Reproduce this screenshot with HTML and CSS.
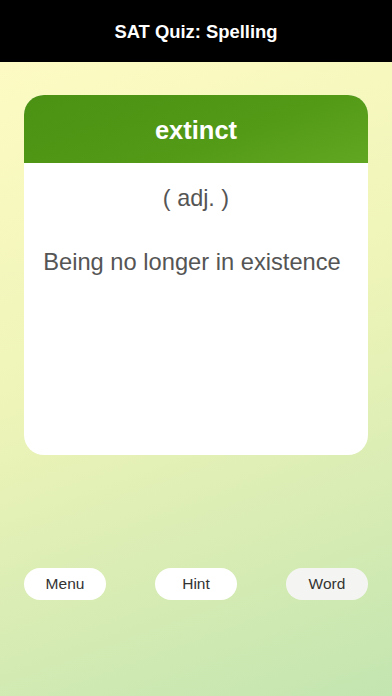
FILE: index.html
```html
<!DOCTYPE html>
<html>
<head>
<meta charset="utf-8">
<link rel="stylesheet" href="styles.css">
</head>
<body>
<div class="app">
  <header class="topbar">SAT Quiz: Spelling</header>
  <main class="content">
    <section class="card">
      <div class="card-head">extinct</div>
      <div class="card-body">
        <div class="pos">( adj. )</div>
        <div class="def">Being no longer in existence</div>
      </div>
    </section>
    <nav class="actions">
      <button class="btn">Menu</button>
      <button class="btn">Hint</button>
      <button class="btn btn-alt">Word</button>
    </nav>
  </main>
</div>
</body>
</html>
```
FILE: styles.css
```css
* { box-sizing: border-box; }
html, body { margin: 0; padding: 0; }
body {
  width: 392px;
  height: 696px;
  overflow: hidden;
  font-family: "Liberation Sans", Arial, sans-serif;
}
.app {
  display: flex;
  flex-direction: column;
  height: 696px;
}
.topbar {
  height: 62px;
  background: #000;
  color: #fff;
  font-weight: bold;
  font-size: 18.4px;
  display: flex;
  align-items: center;
  justify-content: center;
  padding-top: 1px;
}
.content {
  flex: 1;
  background: linear-gradient(160deg, #fdfbc3 0%, #eef4b8 45%, #c3e5b0 100%);
  padding: 33px 24px 0;
  display: flex;
  flex-direction: column;
}
.card {
  height: 360px;
  border-radius: 20px;
  background: #fff;
  overflow: hidden;
  display: flex;
  flex-direction: column;
}
.card-head {
  height: 68px;
  background: linear-gradient(160deg, #4b9113 0%, #539a17 60%, #62a721 100%);
  color: #fff;
  font-weight: bold;
  font-size: 25.5px;
  display: flex;
  align-items: center;
  justify-content: center;
  padding-top: 2px;
}
.card-body {
  display: flex;
  flex-direction: column;
  align-items: center;
  color: #555;
}
.pos {
  margin-top: 22px;
  font-size: 23.4px;
  line-height: 26px;
}
.def {
  margin-top: 38px;
  padding-right: 8px;
  font-size: 23.7px;
  line-height: 26px;
}
.actions {
  margin-top: 113px;
  display: flex;
  justify-content: space-between;
}
.btn {
  width: 82px;
  height: 32px;
  border: none;
  border-radius: 16px;
  background: #fff;
  color: #333;
  font-family: "Liberation Sans", Arial, sans-serif;
  font-size: 15.5px;
  padding: 0;
}
.btn-alt { background: #f4f5f2; }
```
